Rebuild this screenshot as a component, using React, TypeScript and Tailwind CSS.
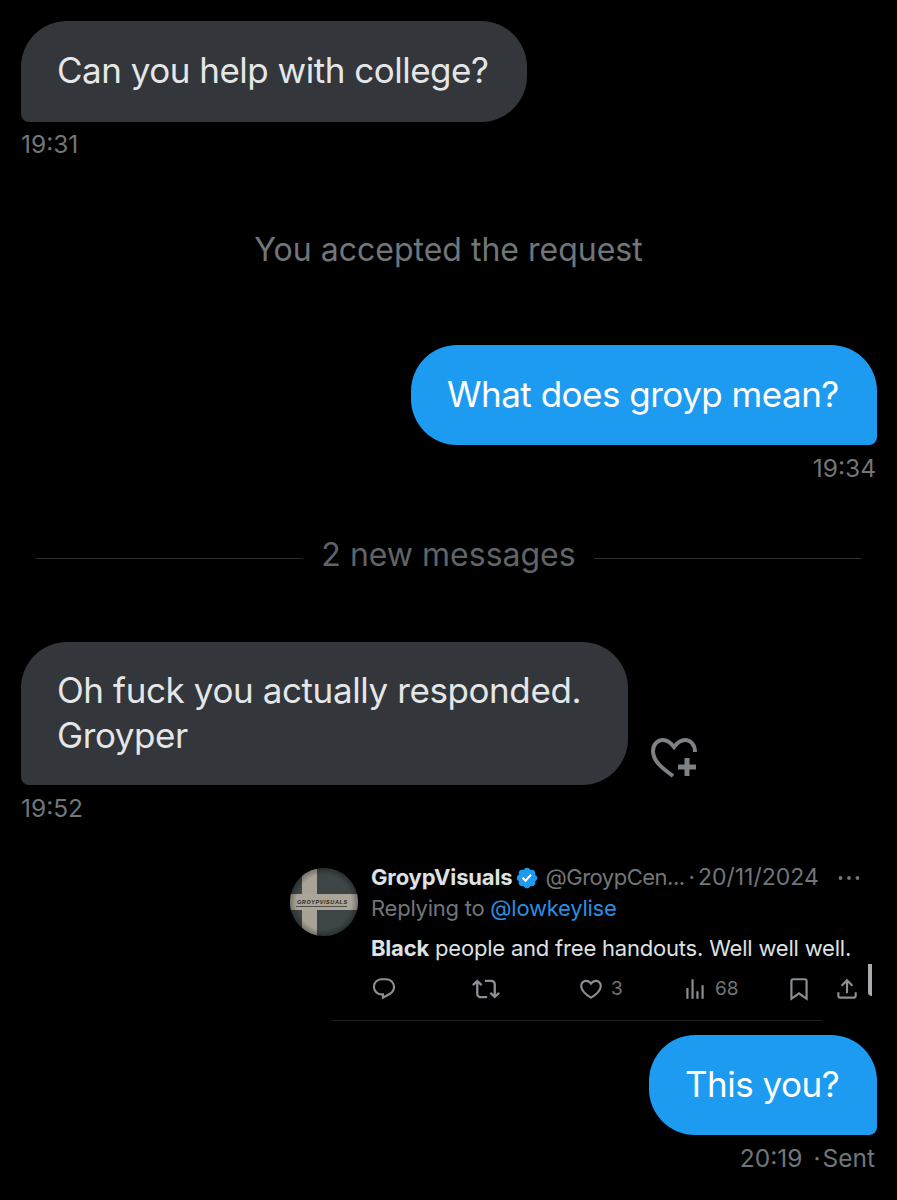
const sans = "font-['Inter','Liberation_Sans',sans-serif]";

function Avatar() {
  return (
    <svg width="68" height="68" viewBox="0 0 68 68" className="shrink-0">
      <defs>
        <clipPath id="avatar-clip">
          <circle cx="34" cy="34" r="34" />
        </clipPath>
        <radialGradient id="avatar-shade" cx="50%" cy="50%" r="50%">
          <stop offset="80%" stopColor="#000" stopOpacity="0" />
          <stop offset="100%" stopColor="#000" stopOpacity="0.3" />
        </radialGradient>
      </defs>
      <g clipPath="url(#avatar-clip)">
        <rect width="68" height="68" fill="#3d4547" />
        <rect x="12" y="0" width="15" height="68" fill="#a8a396" />
        <rect x="0" y="26" width="68" height="16" fill="#aaa598" />
        <text x="7" y="36" textLength="50" lengthAdjust="spacing" fontSize="5.4" fontWeight="700" fontStyle="italic" fill="#26261f" fontFamily="Liberation Sans, sans-serif">
          GROYPVISUALS
        </text>
        <line x1="6" y1="38.5" x2="57" y2="38.5" stroke="#26261f" strokeWidth="0.7" />
        <rect width="68" height="68" fill="url(#avatar-shade)" />
      </g>
    </svg>
  );
}

function Verified() {
  return (
    <svg width="24" height="24" viewBox="0 0 22 22" className="shrink-0">
      <path
        fill="#1d9bf0"
        d="M20.396 11c-.018-.646-.215-1.275-.57-1.816-.354-.54-.852-.972-1.438-1.246.223-.607.27-1.264.14-1.897-.131-.634-.437-1.218-.882-1.687-.47-.445-1.053-.75-1.687-.882-.633-.13-1.29-.083-1.897.14-.273-.587-.704-1.086-1.245-1.44S11.647 1.62 11 1.604c-.646.017-1.273.213-1.813.568s-.969.854-1.24 1.44c-.608-.223-1.267-.272-1.902-.14-.635.13-1.22.436-1.69.882-.445.47-.749 1.055-.878 1.688-.13.633-.08 1.29.144 1.896-.587.274-1.087.705-1.443 1.245-.356.54-.555 1.17-.574 1.817.02.647.218 1.276.574 1.817.356.54.856.972 1.443 1.245-.224.606-.274 1.263-.144 1.896.13.634.433 1.218.877 1.688.47.443 1.054.747 1.687.878.633.132 1.29.084 1.897-.136.274.586.705 1.084 1.246 1.439.54.354 1.17.551 1.816.569.647-.016 1.276-.213 1.817-.567s.972-.854 1.245-1.44c.604.239 1.266.296 1.903.164.636-.132 1.22-.447 1.68-.907.46-.46.776-1.044.908-1.681s.075-1.299-.165-1.903c.586-.274 1.084-.705 1.439-1.246.354-.54.551-1.17.569-1.816z"
      />
      <path fill="#fff" d="M9.662 14.85l-3.429-3.428 1.293-1.302 2.072 2.072 4.4-4.794 1.347 1.246z" />
    </svg>
  );
}

function ActionIcon({ children, size = 26 }: { children: React.ReactNode; size?: number }) {
  return (
    <svg width={size} height={size} viewBox="0 0 24 24" fill="#8a8f93" className="shrink-0">
      {children}
    </svg>
  );
}

function Tweet() {
  return (
    <div className="flex gap-[13px] pl-[290px] pt-[42px]">
      <div className="pt-[4px]">
        <Avatar />
      </div>
      <div className="w-[526px]">
        <div className="flex h-[27px] items-center whitespace-nowrap text-[22px] leading-[27px]">
          <span className="font-bold tracking-[-0.15px] text-[#dfe1e2]">GroypVisuals</span>
          <span className="ml-[3px]">
            <Verified />
          </span>
          <span className="ml-[6px] tracking-[-0.5px] text-[#71767b]">@GroypCen...</span>
          <span className="ml-[4px] text-[#71767b]">·</span>
          <span className="ml-[3px] text-[23px] text-[#71767b]">20/11/2024</span>
          <span className="ml-[18px] text-[#71767b]">
            <svg width="24" height="6" viewBox="0 0 24 6" fill="#71767b">
              <circle cx="3.5" cy="3" r="1.9" />
              <circle cx="12" cy="3" r="1.9" />
              <circle cx="20.5" cy="3" r="1.9" />
            </svg>
          </span>
        </div>
        <div className="mt-[4px] whitespace-nowrap text-[22px] leading-[27px] tracking-[-0.25px] text-[#71767b]">
          Replying to <span className="text-[#2a8ee0]">@lowkeylise</span>
        </div>
        <div className="mt-[13px] whitespace-nowrap text-[22px] leading-[27px] tracking-[-0.2px] text-[#dfe1e2]">
          <b>Black</b> people and free handouts. Well well well.
        </div>
        <div className="mt-[9px] flex h-[36px] items-center text-[19px] text-[#71767b]">
          <ActionIcon>
            <path d="M1.751 10c0-4.42 3.584-8 8.005-8h4.366c4.49 0 8.129 3.64 8.129 8.13 0 2.96-1.607 5.68-4.196 7.11l-8.054 4.46v-3.69h-.067c-4.49.1-8.183-3.51-8.183-8.01zm8.005-6c-3.317 0-6.005 2.69-6.005 6 0 3.37 2.77 6.08 6.138 6.01l.351-.01h1.761v2.3l5.087-2.81c1.951-1.08 3.163-3.13 3.163-5.36 0-3.39-2.744-6.13-6.129-6.13H9.756z" />
          </ActionIcon>
          <span className="ml-[75px]">
            <ActionIcon size={28}>
              <path d="M4.5 3.88l4.432 4.14-1.364 1.46L5.5 7.55V16c0 1.1.896 2 2 2H13v2H7.5c-2.209 0-4-1.79-4-4V7.55L1.432 9.48.068 8.02 4.5 3.88zM16.5 6H11V4h5.5c2.209 0 4 1.79 4 4v8.45l2.068-1.93 1.364 1.46-4.432 4.14-4.432-4.14 1.364-1.46 2.068 1.93V8c0-1.1-.896-2-2-2z" />
            </ActionIcon>
          </span>
          <span className="ml-[78px]">
            <ActionIcon>
              <path d="M16.697 5.5c-1.222-.06-2.679.51-3.89 2.16l-.805 1.09-.806-1.09C9.984 6.01 8.526 5.44 7.304 5.5c-1.243.07-2.349.78-2.91 1.91-.552 1.12-.633 2.78.479 4.82 1.074 1.97 3.257 4.27 7.129 6.61 3.87-2.34 6.052-4.64 7.126-6.61 1.111-2.04 1.03-3.7.477-4.82-.561-1.13-1.666-1.84-2.908-1.91zm4.187 7.69c-1.351 2.48-4.001 5.12-8.379 7.67l-.503.3-.504-.3c-4.379-2.55-7.029-5.19-8.382-7.67-1.36-2.5-1.41-4.86-.514-6.67.887-1.79 2.647-2.91 4.601-3.01 1.651-.09 3.368.56 4.798 2.01 1.429-1.45 3.146-2.1 4.796-2.01 1.954.1 3.714 1.22 4.601 3.01.896 1.81.846 4.17-.514 6.67z" />
            </ActionIcon>
          </span>
          <span className="ml-[7px] w-[71px]">3</span>
          <ActionIcon>
            <path d="M8.75 21V3h2v18h-2zM18 21V8.5h2V21h-2zM4 21l.004-10h2L6 21H4zm9.248 0v-7h2v7h-2z" />
          </ActionIcon>
          <span className="ml-[7px] w-[23px]">68</span>
          <span className="ml-[48px]">
            <ActionIcon>
              <path d="M4 4.5C4 3.12 5.119 2 6.5 2h11C18.881 2 20 3.12 20 4.5v18.44l-8-5.71-8 5.71V4.5zM6.5 4c-.276 0-.5.22-.5.5v14.56l6-4.29 6 4.29V4.5c0-.28-.224-.5-.5-.5h-11z" />
            </ActionIcon>
          </span>
          <span className="ml-[22px]">
            <ActionIcon>
              <path d="M12 2.59l5.7 5.7-1.41 1.42L13 6.41V16h-2V6.41l-3.3 3.3-1.41-1.42L12 2.59zM21 15l-.02 3.51c0 1.38-1.12 2.49-2.5 2.49H5.5C4.11 21 3 19.88 3 18.5V15h2v3.5c0 .28.22.5.5.5h12.98c.28 0 .5-.22.5-.5L19 15h2z" />
            </ActionIcon>
          </span>
          <span className="ml-[8px] -mt-[19px] h-[32px] w-[4px] rounded-t-sm rounded-bl-full bg-[#a9acaf]" />
        </div>
      </div>
    </div>
  );
}

export default function App() {
  return (
    <div className={`h-[1200px] w-[897px] overflow-hidden bg-black ${sans}`}>
      <div className="flex flex-col items-start pl-[21px] pt-[21px]">
        <div className="flex h-[101px] w-[506px] items-center whitespace-nowrap rounded-[46px] rounded-bl-[8px] bg-[#33363a] pb-[2px] pl-[36px] text-[35px] tracking-[-0.5px] text-[#e4e6e7]">
          Can you help with college?
        </div>
        <div className="mt-[8px] text-[24.5px] leading-[28px] text-[#71767b]">19:31</div>
      </div>

      <div className="mt-[72px] text-center text-[32px] leading-[40px] text-[#71767b]">You accepted the request</div>

      <div className="flex flex-col items-end pr-[20px] pt-[75px]">
        <div className="flex h-[100px] w-[466px] items-center whitespace-nowrap rounded-[46px] rounded-br-[8px] bg-[#1d9bf0] pb-[2px] pl-[36px] text-[35px] tracking-[-0.5px] text-white">
          What does groyp mean?
        </div>
        <div className="mr-[1px] mt-[9px] text-[24.5px] leading-[28px] text-[#71767b]">19:34</div>
      </div>

      <div className="mt-[53px] flex items-center gap-[18px] px-[36px]">
        <div className="mt-[6px] h-px flex-1 bg-[#2b2e31]" />
        <span className="text-[32px] leading-[40px] text-[#5f6468]">2 new messages</span>
        <div className="mt-[6px] h-px flex-1 bg-[#2b2e31]" />
      </div>

      <div className="pl-[21px] pt-[67px]">
        <div className="flex items-end">
          <div className="flex h-[143px] w-[607px] flex-col justify-center whitespace-nowrap rounded-[46px] rounded-bl-[8px] bg-[#33363a] pb-[2px] pl-[36px] text-[35px] leading-[45px] tracking-[-0.4px] text-[#e4e6e7]">
            <span>Oh fuck you actually responded.</span>
            <span>Groyper</span>
          </div>
          <svg width="48" height="42" viewBox="0 0 48 42" fill="none" stroke="#7d8286" strokeWidth="4" className="mb-[6px] ml-[22px]">
            <path d="M23 39 C12 31 3 24 3 14 C3 7 8 3 13 3 C18 3 21 6 24 10 C27 6 30 3 35 3 C40 3 45 7 45 15" />
            <path d="M28 30 H46 M37 21 V39" strokeWidth="5" />
          </svg>
        </div>
        <div className="mt-[9px] text-[24.5px] leading-[28px] text-[#71767b]">19:52</div>
      </div>

      <Tweet />

      <div className="ml-[332px] mt-[13px] h-px w-[490px] bg-[#1f2124]" />

      <div className="flex flex-col items-end pr-[20px] pt-[14px]">
        <div className="flex h-[100px] w-[228px] items-center whitespace-nowrap rounded-[46px] rounded-br-[8px] bg-[#1d9bf0] pb-[2px] pl-[36px] text-[35px] tracking-[-0.5px] text-white">
          This you?
        </div>
        <div className="mr-[2px] mt-[9px] flex text-[24.5px] leading-[28px] text-[#71767b]">
          <span>20:19</span>
          <span className="ml-[11px]">·</span>
          <span className="ml-[2px]">Sent</span>
        </div>
      </div>
    </div>
  );
}
